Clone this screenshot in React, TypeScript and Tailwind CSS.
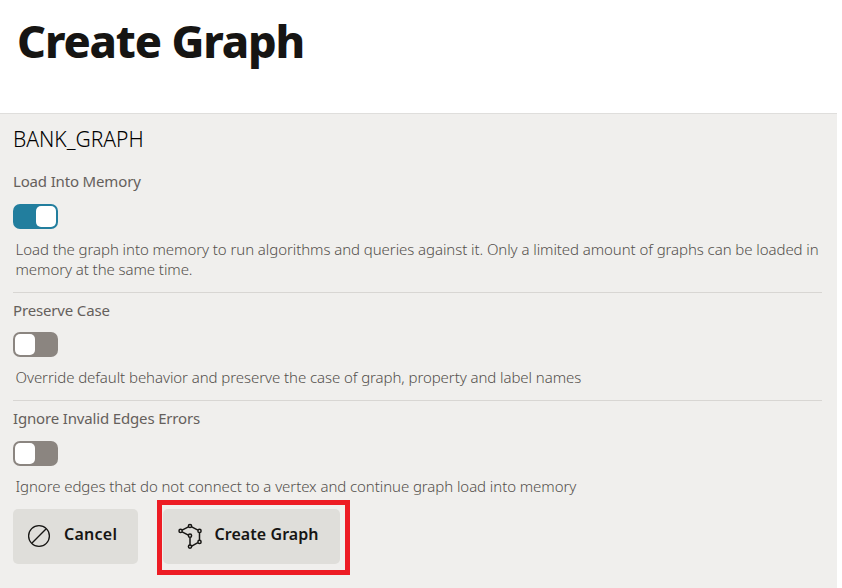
type SwitchProps = { on?: boolean };

function Switch({ on = false }: SwitchProps) {
  return (
    <div
      role="switch"
      aria-checked={on}
      className={`flex h-[25px] w-[45px] items-center rounded-[7px] px-[2px] ${
        on ? 'justify-end bg-[#227e9e]' : 'justify-start bg-[#8b8580]'
      }`}
    >
      <div className="h-[21px] w-[20px] rounded-[5px] bg-white" />
    </div>
  );
}

function CancelIcon() {
  return (
    <svg className="mb-[1px]" width="24" height="24" viewBox="0 0 24 24" fill="none" stroke="#161513" strokeWidth="1.3">
      <circle cx="12" cy="12" r="10.4" />
      <path d="M4.8 19.2 19.2 4.8" />
    </svg>
  );
}

function GraphIcon() {
  return (
    <svg className="mb-[1px]" width="26" height="26" viewBox="0 0 26 26" fill="none" stroke="#161513" strokeWidth="1.5">
      <path d="M11.4 3.9 5.1 7.1M14.7 3.9 20.9 7.1M22.5 9.6V17.4M20.9 19.6 14.7 23.2M13 22.4V14.4M11.4 12.1 5.1 8.8" />
      <circle cx="13" cy="3" r="1.6" />
      <circle cx="3.6" cy="7.9" r="1.6" />
      <circle cx="22.5" cy="7.9" r="1.6" />
      <circle cx="13" cy="12.7" r="1.6" />
      <circle cx="22.5" cy="18.9" r="1.6" />
      <circle cx="13" cy="23.6" r="1.6" />
    </svg>
  );
}

const label = 'text-[15px] leading-[20px] tracking-[-0.16px] text-[#65605c]';
const description =
  'ml-[2.5px] whitespace-nowrap text-[15px] font-light leading-[20px] tracking-[-0.072px] text-[#54504c]';

export default function App() {
  return (
    <div className="h-[588px] w-[842px] overflow-hidden bg-white font-['Noto_Sans',sans-serif] text-[#161513]">
      <header className="h-[113px] pl-[17px] pt-[16px]">
        <h1 className="whitespace-nowrap text-[45px] font-extrabold leading-[49px] tracking-[-1.15px]">Create Graph</h1>
      </header>
      <main className="h-[475px] w-[837px] border-t border-[#dfdedc] bg-[#f0efed] pl-[13px] pr-[15px] pt-[13px]">
        <h2 className="whitespace-nowrap text-[21px] font-light leading-[24px] text-black">BANK_GRAPH</h2>

        <section className="mt-[20px] h-[122px] border-b border-[#d8d6d3]">
          <div className={label}>Load Into Memory</div>
          <div className="pb-[10px] pt-[13px]">
            <Switch on />
          </div>
          <p className={description}>
            Load the graph into memory to run algorithms and queries against it. Only a limited amount of graphs can be loaded in
            <br />
            memory at the same time.
          </p>
        </section>

        <section className="h-[108px] border-b border-[#d8d6d3] pt-[7px]">
          <div className={label}>Preserve Case</div>
          <div className="pb-[10px] pt-[12px]">
            <Switch />
          </div>
          <p className={description}>Override default behavior and preserve the case of graph, property and label names</p>
        </section>

        <section className="pt-[7px]">
          <div className={label}>Ignore Invalid Edges Errors</div>
          <div className="pb-[10px] pt-[13px]">
            <Switch />
          </div>
          <p className={description}>Ignore edges that do not connect to a vertex and continue graph load into memory</p>
        </section>

        <div className="mt-[13px] flex gap-[25px]">
          <button className="flex h-[55px] w-[125px] items-center rounded-[5px] bg-[#dfdeda] pl-[14px]">
            <CancelIcon />
            <span className="mb-[5px] ml-[13px] whitespace-nowrap text-[16px] font-semibold leading-[20px] tracking-[0.25px]">
              Cancel
            </span>
          </button>
          <div className="relative">
            <button className="flex h-[55px] w-[177px] items-center rounded-[5px] bg-[#dfdeda] pl-[14px]">
              <GraphIcon />
              <span className="mb-[5px] ml-[11.5px] whitespace-nowrap text-[16px] font-semibold leading-[20px] tracking-[0.06px]">
                Create Graph
              </span>
            </button>
            <div className="pointer-events-none absolute -left-[6px] -top-[9px] h-[75px] w-[193px] border-[5px] border-[#ed1c24]" />
          </div>
        </div>
      </main>
    </div>
  );
}
